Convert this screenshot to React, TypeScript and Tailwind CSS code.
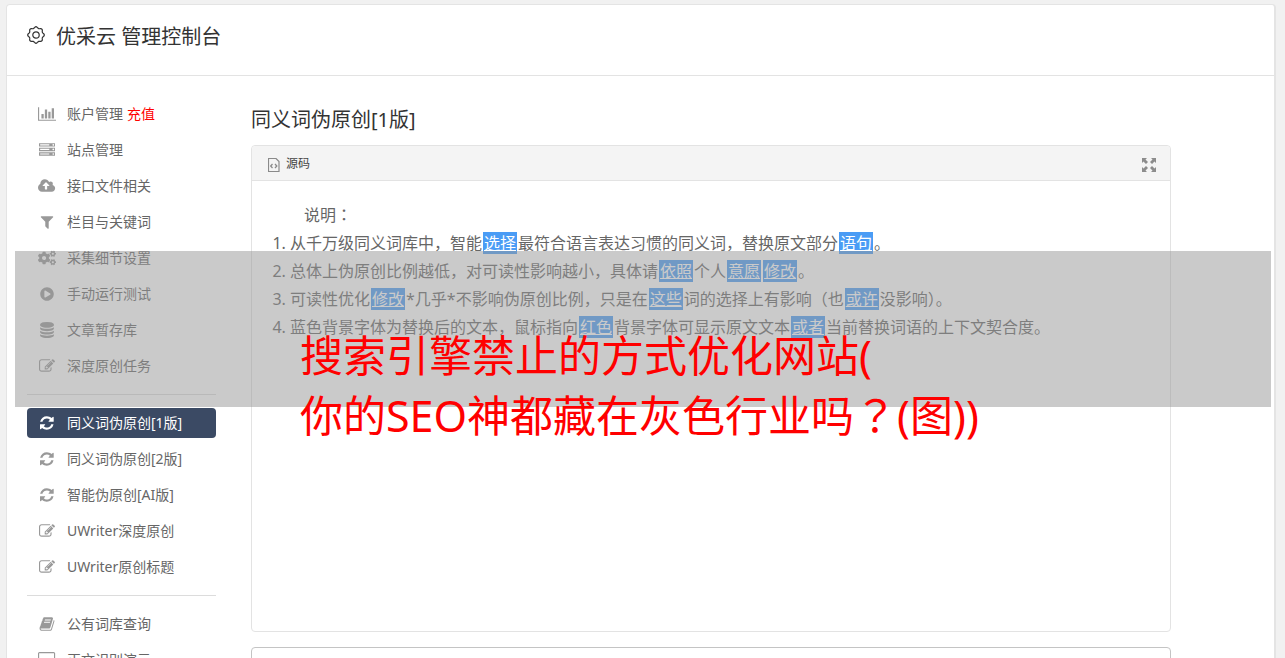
import { Fragment, type ReactNode } from 'react';
import clsx from 'clsx';
import { FaCogs, FaPlayCircle } from 'react-icons/fa';

type GlyphName = 'chart' | 'server' | 'upload' | 'filter' | 'database' | 'edit' | 'refresh' | 'book' | 'desktop';

const glyphs: Record<GlyphName, { width: number; d: string }> = {
  chart: {
    width: 2048,
    d: 'M640 896v512h-256v-512h256zm384-512v1024h-256v-1024h256zm1024 1152v128h-2048v-1536h128v1408h1920zm-640-896v768h-256v-768h256zm384-384v1152h-256v-1152h256z',
  },
  server: {
    width: 1792,
    d: 'M128 1408h1024v-128h-1024v128zm0-512h1024v-128h-1024v128zm1568 448q0-40-28-68t-68-28-68 28-28 68 28 68 68 28 68-28 28-68zm-1568-960h1024v-128h-1024v128zm1568 448q0-40-28-68t-68-28-68 28-28 68 28 68 68 28 68-28 28-68zm0-512q0-40-28-68t-68-28-68 28-28 68 28 68 68 28 68-28 28-68zm96 832v384h-1792v-384h1792zm0-512v384h-1792v-384h1792zm0-512v384h-1792v-384h1792z',
  },
  upload: {
    width: 1920,
    d: 'M1280 864q0-14-9-23l-352-352q-9-9-23-9t-23 9l-351 351q-10 12-10 24 0 14 9 23t23 9h224v352q0 13 9.5 22.5t22.5 9.5h192q13 0 22.5-9.5t9.5-22.5v-352h224q13 0 22.5-9.5t9.5-22.5zm640 288q0 159-112.5 271.5t-271.5 112.5h-1088q-185 0-316.5-131.5t-131.5-316.5q0-130 70-240t188-165q-2-30-2-43 0-212 150-362t362-150q156 0 285.5 87t188.5 231q71-62 166-62 106 0 181 75t75 181q0 76-41 138 130 31 213.5 135.5t83.5 238.5z',
  },
  filter: {
    width: 1792,
    d: 'M1595 295q17 41-14 70l-493 493v742q0 42-39 59-13 5-25 5-27 0-45-19l-256-256q-19-19-19-45v-486l-493-493q-31-29-14-70 17-39 59-39h1280q42 0 59 39z',
  },
  database: {
    width: 1792,
    d: 'M896 768q237 0 443-43t325-127v170q0 69-103 128t-280 93.5-385 34.5-385-34.5-280-93.5-103-128v-170q119 84 325 127t443 43zm0 768q237 0 443-43t325-127v170q0 69-103 128t-280 93.5-385 34.5-385-34.5-280-93.5-103-128v-170q119 84 325 127t443 43zm0-384q237 0 443-43t325-127v170q0 69-103 128t-280 93.5-385 34.5-385-34.5-280-93.5-103-128v-170q119 84 325 127t443 43zm0-1152q208 0 385 34.5t280 93.5 103 128v128q0 69-103 128t-280 93.5-385 34.5-385-34.5-280-93.5-103-128v-128q0-69 103-128t280-93.5 385-34.5z',
  },
  edit: {
    width: 1792,
    d: 'M888 1184l116-116-152-152-116 116v56h96v96h56zm440-720q-16-16-33 1l-350 350q-17 17-1 33t33-1l350-350q17-17 1-33zm80 594v190q0 119-84.5 203.5t-203.5 84.5h-832q-119 0-203.5-84.5t-84.5-203.5v-832q0-119 84.5-203.5t203.5-84.5h832q63 0 117 25 15 7 18 23 3 17-9 29l-49 49q-14 14-32 8-23-6-45-6h-832q-66 0-113 47t-47 113v832q0 66 47 113t113 47h832q66 0 113-47t47-113v-126q0-13 9-22l64-64q15-15 35-7t20 29zm-96-738l288 288-672 672h-288v-288zm444 132l-92 92-288-288 92-92q28-28 68-28t68 28l152 152q28 28 28 68t-28 68z',
  },
  refresh: {
    width: 1536,
    d: 'M1511 1056q0 5-1 7-64 268-268 434.5t-478 166.5q-146 0-282.5-55t-243.5-157l-129 129q-19 19-45 19t-45-19-19-45v-448q0-26 19-45t45-19h448q26 0 45 19t19 45-19 45l-137 137q71 66 161 102t187 36q134 0 250-65t186-179q11-17 53-117 8-23 30-23h192q13 0 22.5 9.5t9.5 22.5zm25-800v448q0 26-19 45t-45 19h-448q-26 0-45-19t-19-45 19-45l138-138q-148-137-349-137-134 0-250 65t-186 179q-11 17-53 117-8 23-30 23h-199q-13 0-22.5-9.5t-9.5-22.5v-7q65-268 270-434.5t480-166.5q146 0 284 55.5t245 156.5l130-129q19-19 45-19t45 19 19 45z',
  },
  book: {
    width: 1792,
    d: 'M1703 478q40 57 18 129l-275 906q-19 64-76.5 107.5t-122.5 43.5h-923q-77 0-148.5-53.5t-99.5-131.5q-24-67-2-127 0-4 3-27t4-37q1-8-3-21.5t-3-19.5q2-11 8-21t16.5-23.5 16.5-23.5q23-38 45-91.5t30-91.5q3-10 .5-30t-.5-28q3-11 17-28t17-23q21-36 42-92t25-90q1-9-2.5-32t.5-28q4-13 22-30.5t22-22.5q19-26 42.5-84.5t27.5-96.5q1-8-3-25.5t-2-26.5q2-8 9-18t18-23 17-21q8-12 16.5-30.5t15-35 16-36 19.5-32 26.5-23.5 36-11.5 47.5 5.5l-1 3q38-9 51-9h761q74 0 114 56t18 130l-274 906q-36 119-71.5 153.5t-128.5 34.5h-869q-27 0-38 15-11 16-1 43 24 70 144 70h923q29 0 56-15.5t35-41.5l300-987q7-22 5-57 38 15 59 43zm-1064 2q-4 13 2 22.5t20 9.5h608q13 0 25.5-9.5t16.5-22.5l21-64q4-13-2-22.5t-20-9.5h-608q-13 0-25.5 9.5t-16.5 22.5zm-83 256q-4 13 2 22.5t20 9.5h608q13 0 25.5-9.5t16.5-22.5l21-64q4-13-2-22.5t-20-9.5h-608q-13 0-25.5 9.5t-16.5 22.5z',
  },
  desktop: {
    width: 1920,
    d: 'M1792 992v-832q0-13-9.5-22.5t-22.5-9.5h-1600q-13 0-22.5 9.5t-9.5 22.5v832q0 13 9.5 22.5t22.5 9.5h1600q13 0 22.5-9.5t9.5-22.5zm128-832v1088q0 66-47 113t-113 47h-544q0 37 16 77.5t32 71 16 43.5q0 26-19 45t-45 19h-512q-26 0-45-19t-19-45q0-14 16-44t32-70 16-78h-544q-66 0-113-47t-47-113v-1088q0-66 47-113t113-47h1600q66 0 113 47t47 113z',
  },
};

function Glyph({ name }: { name: GlyphName }) {
  const { width, d } = glyphs[name];
  return (
    <svg className="h-4 w-auto shrink-0" viewBox={`0 0 ${width} 1792`} fill="currentColor" aria-hidden>
      <path d={d} />
    </svg>
  );
}

// Rounded cog outline with eight soft teeth
const gearPoints = Array.from({ length: 96 }, (_, i) => {
  const angle = (i / 96) * Math.PI * 2;
  const radius = 7.6 + 0.7 * Math.cos(angle * 8);
  return `${(9 + radius * Math.cos(angle)).toFixed(2)},${(9 + radius * Math.sin(angle)).toFixed(2)}`;
}).join(' ');

function Gear() {
  return (
    <svg className="mt-1 size-[18px]" viewBox="0 0 18 18" fill="none" stroke="currentColor" strokeWidth="1.2" aria-hidden>
      <polygon points={gearPoints} />
      <circle cx="9" cy="9" r="3.2" />
    </svg>
  );
}

interface MenuItem {
  label: string;
  icon: ReactNode;
  extra?: string;
  active?: boolean;
}

const menuGroups: MenuItem[][] = [
  [
    { label: '账户管理', icon: <Glyph name="chart" />, extra: '充值' },
    { label: '站点管理', icon: <Glyph name="server" /> },
    { label: '接口文件相关', icon: <Glyph name="upload" /> },
    { label: '栏目与关键词', icon: <Glyph name="filter" /> },
    { label: '采集细节设置', icon: <FaCogs size={18} /> },
    { label: '手动运行测试', icon: <FaPlayCircle size={14} /> },
    { label: '文章暂存库', icon: <Glyph name="database" /> },
    { label: '深度原创任务', icon: <Glyph name="edit" /> },
  ],
  [
    { label: '同义词伪原创[1版]', icon: <Glyph name="refresh" />, active: true },
    { label: '同义词伪原创[2版]', icon: <Glyph name="refresh" /> },
    { label: '智能伪原创[AI版]', icon: <Glyph name="refresh" /> },
    { label: 'UWriter深度原创', icon: <Glyph name="edit" /> },
    { label: 'UWriter原创标题', icon: <Glyph name="edit" /> },
  ],
  [
    { label: '公有词库查询', icon: <Glyph name="book" /> },
    { label: '正文识别演示', icon: <Glyph name="desktop" /> },
  ],
];

// Words between braces are the replaced synonyms
const notes = [
  '从千万级同义词库中，智能{选择}最符合语言表达习惯的同义词，替换原文部分{语句}。',
  '总体上伪原创比例越低，对可读性影响越小，具体请{依照}个人{意愿}{修改}。',
  '可读性优化{修改}*几乎*不影响伪原创比例，只是在{这些}词的选择上有影响（也{或许}没影响）。',
  '蓝色背景字体为替换后的文本，鼠标指向{红色}背景字体可显示原文文本{或者}当前替换词语的上下文契合度。',
];

// Full-width colons, question marks and brackets sit in the middle of their cell
function Prose({ text }: { text: string }) {
  return (
    <>
      {text.split(/([：？（）])/).map((part, i) =>
        i % 2 === 1 ? (
          <span key={i} className="font-['Noto_Sans','Noto_Sans_CJK_TC',sans-serif]" lang="zh-TW">
            {part}
          </span>
        ) : (
          <Fragment key={i}>{part}</Fragment>
        ),
      )}
    </>
  );
}

function Note({ text }: { text: string }) {
  return (
    <li>
      {text.split(/[{}]/).map((part, i) =>
        i % 2 === 1 ? (
          <u key={i} className="mx-px bg-[#4a9cf5] px-px text-white">
            {part}
          </u>
        ) : (
          <Prose key={i} text={part} />
        ),
      )}
    </li>
  );
}

function Sidebar() {
  return (
    <nav className="w-[189px] shrink-0 pt-[23px]">
      {menuGroups.map((group, g) => (
        <ul
          key={g}
          className={clsx('flex flex-col gap-1.5', g > 0 && 'mt-[13px] border-t border-[#dcdcdc] pt-[13px]')}
        >
          {group.map((item) => (
            <li
              key={item.label}
              className={clsx('flex h-[30px] items-center rounded text-sm', item.active ? 'bg-[#3b4a64] text-white' : 'text-[#666]')}
            >
              <a href="#" className="flex items-center gap-2.5 pl-2.5">
                <span className={clsx('flex w-5 justify-center', item.active ? 'text-white' : 'text-[#999]')}>{item.icon}</span>
                {item.label}
              </a>
              {item.extra ? (
                <a href="#" className="ml-1 text-[#f00]">
                  {item.extra}
                </a>
              ) : null}
            </li>
          ))}
        </ul>
      ))}
    </nav>
  );
}

function SourcePanel() {
  return (
    <section className="rounded border border-[#e3e3e3]">
      <header className="flex h-[35px] items-center justify-between rounded-t border-b border-[#e3e3e3] bg-[#f4f4f4] px-3.5 pt-[3px]">
        <div className="flex items-center gap-1.5 pl-0.5 text-xs text-[#444]">
          <svg className="h-3.5 w-3" viewBox="0 0 12 14" fill="none" stroke="#8a8a8a" aria-hidden>
            <path d="M.5.5h7.500l3 3v10H.5z" strokeWidth="1.200" />
            <path d="M4.500 6 2.700 8l1.800 2M7 6l1.800 2L7 10" strokeWidth="1.300" />
          </svg>
          <span className="pb-0.5">源码</span>
        </div>
        <button type="button" aria-label="全屏">
          <svg className="size-3.5" viewBox="0 0 14 14" fill="#8c8c8c" aria-hidden>
            <path d="M0 0h5L3.500 1.500 6 4 4 6 1.500 3.500 0 5zM14 0v5l-1.500-1.500L10 6 8 4l2.500-2.500L9 0zM0 14V9l1.500 1.500L4 8l2 2-2.500 2.500L5 14zM14 14H9l1.500-1.500L8 10l2-2 2.500 2.500L14 9z" />
          </svg>
        </button>
      </header>
      <div className="min-h-[450px] pt-5 pl-5 text-base leading-7 text-[#666]">
        <p className="indent-8">
          <Prose text="说明：" />
        </p>
        <ol className="list-decimal pl-[18px]">
          {notes.map((note) => (
            <Note key={note} text={note} />
          ))}
        </ol>
      </div>
    </section>
  );
}

function Banner() {
  return (
    <div className="pointer-events-none absolute top-[251px] right-3.5 left-[15px] h-[156px] bg-[#959595]/50 pt-[75px] pl-[285px] text-[43px] leading-[60px] whitespace-nowrap text-[#f00]">
      <p>搜索引擎禁止的方式优化网站(</p>
      <p>
        <Prose text="你的SEO神都藏在灰色行业吗？(图))" />
      </p>
    </div>
  );
}

export default function App() {
  return (
    <div
      lang="zh-CN"
      className="relative h-screen overflow-hidden bg-[#f1f1f1] pt-1 pr-[9px] pl-1.5 font-['Noto_Sans','Noto_Sans_CJK_SC',sans-serif]"
    >
      <div className="min-h-full rounded-t border border-r-2 border-[#e4e4e4] bg-white">
        <header className="flex h-[71px] items-start gap-[11px] border-b border-[#e3e3e3] pt-[17px] pl-5 text-[#333]">
          <Gear />
          <h1 className="text-xl leading-[30px]">优采云 管理控制台</h1>
        </header>
        <div className="flex gap-[35px] pr-[103px] pl-5">
          <Sidebar />
          <main className="min-w-0 flex-1 pt-[29px]">
            <h2 className="mb-[11px] text-xl leading-[29px] text-[#333]">同义词伪原创[1版]</h2>
            <SourcePanel />
            <textarea aria-label="原文" className="mt-[15px] block h-40 w-full resize-none rounded border border-[#c4c4c4] p-3" />
          </main>
        </div>
      </div>
      <Banner />
    </div>
  );
}
